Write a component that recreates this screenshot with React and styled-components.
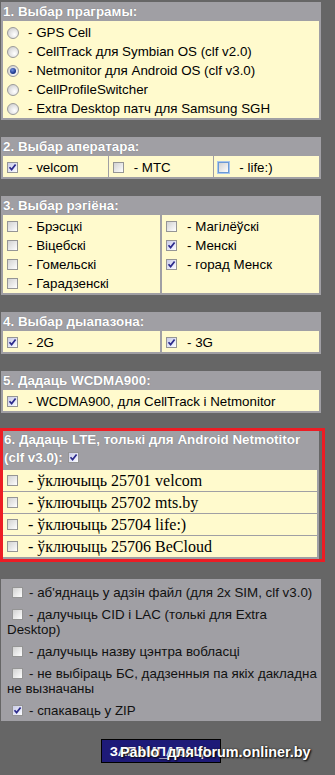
import React from "react";
import styled, { createGlobalStyle } from "styled-components";

const GlobalStyle = createGlobalStyle`
  html, body {
    margin: 0;
    padding: 0;
    background: #666666;
  }
  body {
    font-family: "Liberation Sans", Arial, sans-serif;
    font-size: 13.33px;
    color: #111;
  }
`;

const Page = styled.div`
  position: relative;
  width: 335px;
  padding-top: 2px;
  padding-bottom: 20px;
`;

const Panel = styled.div`
  width: ${(p) => p.$w || 320}px;
  margin: ${(p) => (p.$first ? 0 : 17)}px 0 0 ${(p) => (p.$flush ? 0 : 1)}px;
  box-sizing: border-box;
  background: #a09fa4;
  padding: 0 2px ${(p) => p.$bottom ?? 2}px ${(p) => (p.$flush ? 0 : 2)}px;
`;

const Header = styled.div`
  min-height: 19px;
  line-height: ${(p) => p.$lh || 19}px;
  padding: 0 0 ${(p) => p.$pb || 0}px ${(p) => p.$pl || 0}px;
  font-weight: bold;
  font-size: 13.4px;
  color: #fff;
  text-shadow: 0 0 1px #6a6a70;
`;

const Body = styled.div`
  display: grid;
  grid-template-columns: repeat(${(p) => p.$cols || 1}, 1fr);
  gap: ${(p) => p.$gap ?? 2}px;
`;

const Cell = styled.div`
  background: #fffacd;
  padding: ${(p) => p.$pt ?? 2}px 0 0 4px;
`;

const Row = styled.label`
  display: flex;
  align-items: center;
  height: ${(p) => p.$h || 19}px;
  gap: ${(p) => p.$gap || 10}px;
  white-space: nowrap;
  font-family: ${(p) =>
    p.$serif
      ? '"Liberation Serif", "Times New Roman", serif'
      : '"Liberation Sans", Arial, sans-serif'};
  font-size: ${(p) => (p.$serif ? 16 : 13.33)}px;
  color: #000;
`;

const Box = styled.span`
  display: inline-block;
  flex: none;
  width: 11px;
  height: 11px;
  box-sizing: border-box;
  border: 1px solid ${(p) => (p.$focus ? "#6b9ad6" : "#959595")};
  box-shadow: ${(p) => (p.$focus ? "0 0 0 1px #a9c6ec" : "none")};
  background: ${(p) =>
    p.$checked
      ? "linear-gradient(135deg, #c9cbe6 0%, #eef0fb 75%, #ffffff 100%)"
      : "linear-gradient(135deg, #d2d2d2 0%, #eeeeee 65%, #ffffff 100%)"};
  vertical-align: middle;
  svg {
    display: block;
  }
`;

const Radio = styled.span`
  flex: none;
  width: 12px;
  height: 12px;
  border-radius: 50%;
  box-sizing: border-box;
  border: 1px solid #9a9a9a;
  background: radial-gradient(circle at 65% 65%, #ffffff 0%, #e6e6e6 45%, #c4c4c4 100%);
  display: flex;
  align-items: center;
  justify-content: center;
  &::after {
    content: "";
    display: ${(p) => (p.$checked ? "block" : "none")};
    width: 6px;
    height: 6px;
    border-radius: 50%;
    background: radial-gradient(circle at 40% 35%, #6f8fe0 0%, #203c8f 60%, #142463 100%);
  }
`;

const Red = styled.div`
  width: 325px;
  margin-top: 15px;
  box-sizing: border-box;
  border: 3px solid #ed1c24;
`;

const Options = styled.div`
  width: 320px;
  margin: 17px 0 0 1px;
  box-sizing: border-box;
  background: #a09fa4;
  padding: 3px 2px 0 6px;
  height: 142px;
`;

const Option = styled.div`
  line-height: 15px;
  padding: 3px 0 4px;
  color: #111;
  font-size: 13.33px;
`;

const OptBox = styled(Box)`
  margin: 0 6px 0 5px;
  vertical-align: -1px;
`;

const HeaderBox = styled(Box)`
  margin-left: 5px;
  vertical-align: -1px;
`;

const ButtonBar = styled.div`
  width: 320px;
  margin: 18px 0 0 1px;
  display: flex;
  justify-content: center;
`;

const Button = styled.button`
  width: 120px;
  height: 24px;
  padding: 0;
  background: #1e1a78;
  border: 1px solid #000;
  color: #fff;
  font-family: "Liberation Sans", Arial, sans-serif;
  font-weight: bold;
  font-size: 13px;
`;

const Watermark = styled.div`
  position: absolute;
  left: 120px;
  top: 744px;
  font-family: "Liberation Sans", Arial, sans-serif;
  font-weight: bold;
  font-size: 14.4px;
  line-height: 16px;
  color: #fff;
  white-space: nowrap;
  text-shadow: 1px 1px 2px #000, 0 0 2px #222;
`;

const Check = () => (
  <svg width="9" height="9" viewBox="0 0 9 9">
    <path d="M1.5 4.2 L3.6 6.6 L7.6 1.4" fill="none" stroke="#2b2a8c" strokeWidth="1.7" />
  </svg>
);

const CheckBox = ({ checked, focus }) => (
  <Box $checked={checked} $focus={focus}>
    {checked && <Check />}
  </Box>
);

const programs = [
  { label: "GPS Cell" },
  { label: "CellTrack для Symbian OS (clf v2.0)" },
  { label: "Netmonitor для Android OS (clf v3.0)", checked: true },
  { label: "CellProfileSwitcher" },
  { label: "Extra Desktop патч для Samsung SGH" },
];

const operators = [
  { label: "velcom", checked: true },
  { label: "MTC" },
  { label: "life:)", focus: true },
];

const regionsLeft = [
  { label: "Брэсцкі" },
  { label: "Віцебскі" },
  { label: "Гомельскі" },
  { label: "Гарадзенскі" },
];

const regionsRight = [
  { label: "Магілёўскі" },
  { label: "Менскі", checked: true },
  { label: "горад Менск", checked: true },
];

const lte = [
  "ўключыць 25701 velcom",
  "ўключыць 25702 mts.by",
  "ўключыць 25704 life:)",
  "ўключыць 25706 BeCloud",
];

const options = [
  { label: "аб'яднаць у адзін файл (для 2x SIM, clf v3.0)" },
  { label: "далучыць CID і LAC (толькі для Extra Desktop)" },
  { label: "далучыць назву цэнтра вобласці" },
  { label: "не выбіраць БС, дадзенныя па якіх дакладна не вызначаны" },
  { label: "спакаваць у ZIP", checked: true },
];

const CheckRow = ({ item }) => (
  <Row>
    <CheckBox checked={item.checked} focus={item.focus} />
    <span>- {item.label}</span>
  </Row>
);

export default function App() {
  return (
    <Page>
      <GlobalStyle />

      <Panel $first>
        <Header>1. Выбар праграмы:</Header>
        <Body>
          <Cell>
            {programs.map((p) => (
              <Row key={p.label} $gap={9}>
                <Radio $checked={p.checked} />
                <span>- {p.label}</span>
              </Row>
            ))}
          </Cell>
        </Body>
      </Panel>

      <Panel>
        <Header>2. Выбар аператара:</Header>
        <Body $cols={3} $gap={1}>
          {operators.map((o) => (
            <Cell key={o.label}>
              <CheckRow item={o} />
            </Cell>
          ))}
        </Body>
      </Panel>

      <Panel>
        <Header>3. Выбар рэгіёна:</Header>
        <Body $cols={2}>
          <Cell>
            {regionsLeft.map((r) => (
              <CheckRow key={r.label} item={r} />
            ))}
          </Cell>
          <Cell>
            {regionsRight.map((r) => (
              <CheckRow key={r.label} item={r} />
            ))}
          </Cell>
        </Body>
      </Panel>

      <Panel>
        <Header>4. Выбар дыапазона:</Header>
        <Body $cols={2}>
          <Cell>
            <CheckRow item={{ label: "2G", checked: true }} />
          </Cell>
          <Cell>
            <CheckRow item={{ label: "3G", checked: true }} />
          </Cell>
        </Body>
      </Panel>

      <Panel>
        <Header>5. Дадаць WCDMA900:</Header>
        <Body>
          <Cell>
            <CheckRow item={{ label: "WCDMA900, для CellTrack і Netmonitor", checked: true }} />
          </Cell>
        </Body>
      </Panel>

      <Red>
        <Panel $first $flush $w={316}>
          <Header $lh={18} $pb={3} $pl={1}>
            6. Дадаць LTE, толькі для Android Netmotitor (clf v3.0):
            <HeaderBox $checked>
              <Check />
            </HeaderBox>
          </Header>
          <Body $gap={1}>
            {lte.map((l) => (
              <Cell key={l} $pt={0}>
                <Row $serif $h={21}>
                  <CheckBox />
                  <span>- {l}</span>
                </Row>
              </Cell>
            ))}
          </Body>
        </Panel>
      </Red>

      <Options>
        {options.map((o) => (
          <Option key={o.label}>
            <OptBox $checked={o.checked}>{o.checked && <Check />}</OptBox>- {o.label}
          </Option>
        ))}
      </Options>

      <ButtonBar>
        <Button type="button">ЗАПАМПАВАЦЬ</Button>
      </ButtonBar>

      <Watermark>Pablo_для forum.onliner.by</Watermark>
    </Page>
  );
}
